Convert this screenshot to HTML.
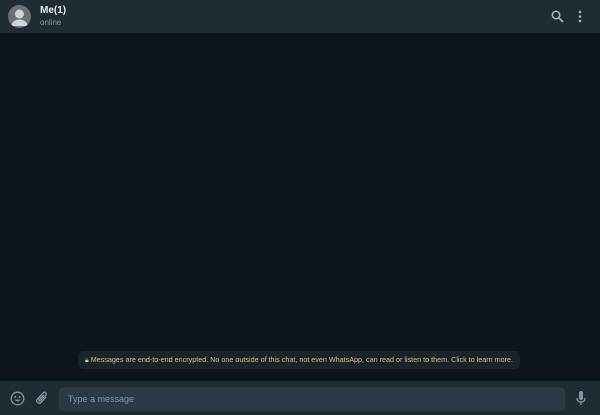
<!DOCTYPE html>
<html><head><style>
*{margin:0;padding:0;box-sizing:border-box}
body{width:600px;height:415px;overflow:hidden;background:#0d151c;font-family:"Liberation Sans",sans-serif;position:relative}
.hdr{position:absolute;left:0;top:0;width:600px;height:33px;background:#1f2c33}
.av{position:absolute;left:8px;top:5px;width:23px;height:23px;border-radius:50%;background:#6a7175;overflow:hidden}
.name{position:absolute;left:40px;top:5px;color:#e9edef;font-size:10px;font-weight:bold}
.st{position:absolute;left:40px;top:18px;color:#8696a0;font-size:8px}
.chat{position:absolute;left:0;top:33px;width:600px;height:348px;background:#0d151c}
.note{position:absolute;left:78px;top:351px;width:442px;height:18px;background:#18232b;border-radius:5px;color:#e3c16f;font-size:7.2px;line-height:18px;text-align:center;white-space:nowrap}
.ftr{position:absolute;left:0;top:381px;width:600px;height:34px;background:#1f2c33}
.in{position:absolute;left:59px;top:387px;width:506px;height:24px;background:#2a3942;border-radius:5px;color:#8696a0;font-size:9px;line-height:24px;padding-left:9px}
</style></head><body>
<div class="chat"></div>
<div class="hdr">
<div class="av"><svg width="23" height="23" viewBox="0 0 23 23"><circle cx="11.5" cy="9" r="4.5" fill="#cfd4d6"/><path d="M3 21c1.5-5 5-6.5 8.5-6.5S18.5 16 20 21z" fill="#cfd4d6"/></svg></div>
<div class="name">Me(1)</div><div class="st">online</div>
<svg style="position:absolute;left:551px;top:10px" width="13" height="13" viewBox="0 0 13 13"><circle cx="5" cy="5" r="3.7" fill="none" stroke="#aebac1" stroke-width="1.5"/><path d="M7.8 7.8L12 12" stroke="#aebac1" stroke-width="1.6"/></svg>
<svg style="position:absolute;left:578px;top:10px" width="4" height="13" viewBox="0 0 4 13"><circle cx="2" cy="2" r="1.3" fill="#aebac1"/><circle cx="2" cy="6.5" r="1.3" fill="#aebac1"/><circle cx="2" cy="11" r="1.3" fill="#aebac1"/></svg>
</div>
<div class="note">🔒︎ Messages are end-to-end encrypted. No one outside of this chat, not even WhatsApp, can read or listen to them. Click to learn more.</div>
<div class="ftr">
<svg style="position:fixed;left:10px;top:391px" width="15" height="15" viewBox="0 0 15 15"><circle cx="7.5" cy="7.5" r="6.3" fill="none" stroke="#8696a0" stroke-width="1.3"/><circle cx="5.3" cy="6" r="1" fill="#8696a0"/><circle cx="9.7" cy="6" r="1" fill="#8696a0"/><path d="M4.3 8.6q3.2 3.4 6.4 0z" fill="#8696a0"/></svg>
<svg style="position:fixed;left:35px;top:391px" width="14" height="15" viewBox="0 0 14 15"><path d="M11 6L6 11.5a2.5 2.5 0 01-3.6-3.5l6-6.3a1.7 1.7 0 012.4 2.4L5.3 9.8a.8.8 0 01-1.2-1.1L8.7 4" fill="none" stroke="#8696a0" stroke-width="1.3"/></svg>
<svg style="position:fixed;left:576px;top:390px" width="10" height="17" viewBox="0 0 10 17"><rect x="3" y="1" width="4" height="9" rx="2" fill="#8696a0"/><path d="M1 8q0 4 4 4t4-4M5 12v3" fill="none" stroke="#8696a0" stroke-width="1.3"/></svg>
</div>
<div class="in">Type a message</div>
</body></html>
